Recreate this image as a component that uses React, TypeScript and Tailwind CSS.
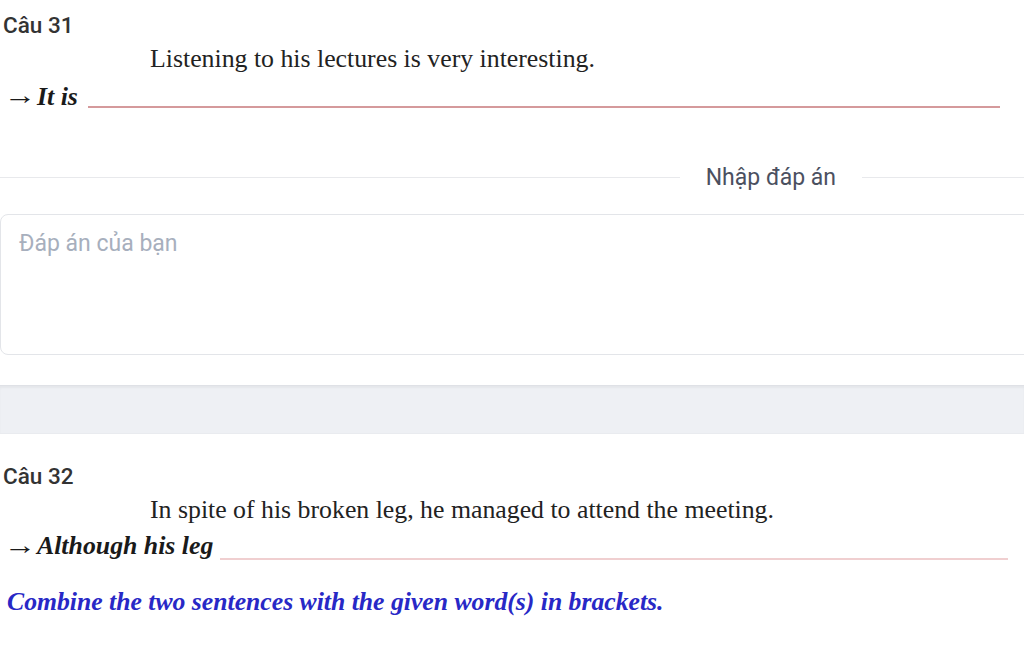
import React from "react";

const SERIF = "font-['Liberation_Serif','Times_New_Roman',serif]";
const SANS = "font-['Roboto','Liberation_Sans',sans-serif]";

function QuestionLabel({ children }: { children: React.ReactNode }) {
  return (
    <div className={`${SANS} text-[22.5px] font-medium leading-none text-[#333333] pl-[3px]`}>
      {children}
    </div>
  );
}

function AnswerLine({
  lead,
  lineClass,
}: {
  lead: string;
  lineClass: string;
}) {
  return (
    <div className="flex items-end pl-[4px]">
      <span className={`${SERIF} inline-block origin-left scale-x-125 text-[26px] leading-none text-[#1a1a1a]`}>→</span>
      <span className={`${SERIF} text-[25.8px] leading-none font-bold italic text-[#1a1a1a] ml-[7px]`}>
        {lead}
      </span>
      <div className={lineClass} />
    </div>
  );
}

export default function App() {
  return (
    <div className="w-[1024px] h-[658px] overflow-hidden bg-white">
      {/* Câu 31 */}
      <div className="pt-[14px]">
        <QuestionLabel>Câu 31</QuestionLabel>
        <p className={`${SERIF} text-[25.8px] leading-none text-[#222222] pl-[150px] mt-[9px]`}>
          Listening to his lectures is very interesting.
        </p>
        <div className="mt-[12px]">
          <AnswerLine lead="It is" lineClass="ml-[10px] mb-[1px] w-[912px] h-[2px] bg-[#d59a9c]" />
        </div>

        {/* Nhập đáp án divider */}
        <div className="flex items-center mt-[57px]">
          <div className="flex-1 h-px bg-[#e8e9ec]" />
          <span className={`${SANS} text-[23px] leading-none text-[#4b5060] mx-[26px]`}>
            Nhập đáp án
          </span>
          <div className="w-[162px] h-px bg-[#e8e9ec]" />
        </div>

        {/* Textarea */}
        <div className="mt-[25px] w-[1040px] h-[141px] rounded-[8px] border border-[#e3e5e9] px-[18px] pt-[17px]">
          <span className={`${SANS} text-[23px] leading-none text-[#a7afbd]`}>Đáp án của bạn</span>
        </div>
      </div>

      {/* separator band */}
      <div className="mt-[30px] h-[49px] bg-[#eef0f4] border-t border-[#dfe1e6] border-b border-b-[#e9ebef] shadow-[inset_0_2px_2px_rgba(0,0,0,0.04)]" />

      {/* Câu 32 */}
      <div className="pt-[31px]">
        <QuestionLabel>Câu 32</QuestionLabel>
        <p className={`${SERIF} text-[25.8px] leading-none text-[#222222] pl-[150px] mt-[9px]`}>
          In spite of his broken leg, he managed to attend the meeting.
        </p>
        <div className="mt-[10px]">
          <AnswerLine lead="Although his leg" lineClass="ml-[7px] -mb-[1px] w-[788px] h-[2px] bg-[#f0cfd0]" />
        </div>
        <p className={`${SERIF} text-[25.7px] leading-none font-bold italic text-[#2828c6] pl-[7px] mt-[30px]`}>
          Combine the two sentences with the given word(s) in brackets.
        </p>
      </div>
    </div>
  );
}
